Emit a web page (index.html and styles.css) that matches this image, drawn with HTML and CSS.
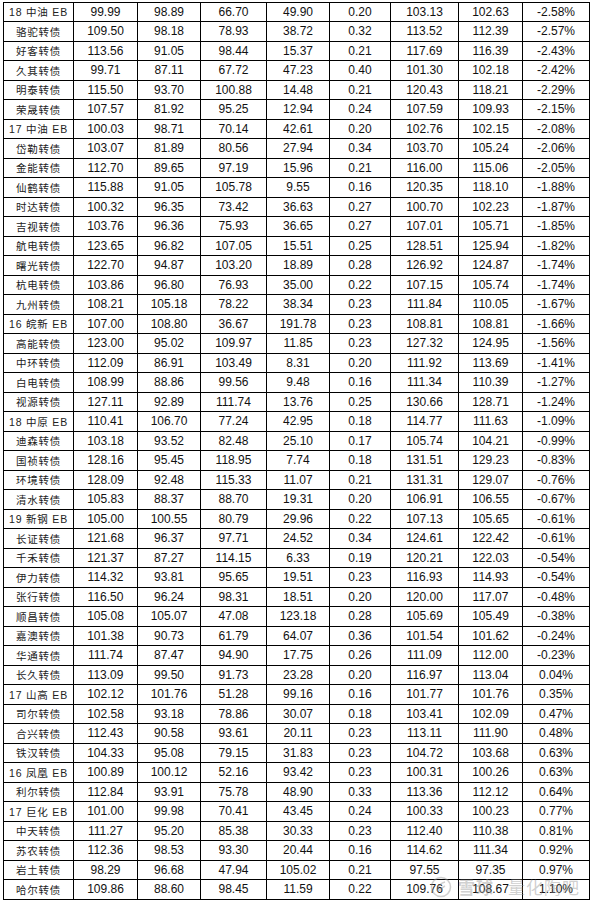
FILE: index.html
```html
<!DOCTYPE html>
<html lang="zh-CN">
<head>
<meta charset="utf-8">
<title>转债表</title>
<link rel="stylesheet" href="styles.css">
</head>
<body>
<div class="page">
  <div class="sheet" id="sheet"></div>
  <div class="watermark">
    <svg class="wm-logo" viewBox="0 0 22 22" width="22" height="22"><circle cx="11" cy="11" r="9.5" fill="none" stroke="currentColor" stroke-width="1.6"/><path d="M7 15 C8 10 11 7 15 6 M9 15 C11 12 13 11 15 10" fill="none" stroke="currentColor" stroke-width="1.6"/></svg>
    <span class="wm-text">雪球</span>
    <span class="wm-text wm-sub">量化陶吧</span>
  </div>
</div>
<script>
var rows = [
["18 中油 EB","99.99","98.89","66.70","49.90","0.20","103.13","102.63","-2.58%"],
["骆驼转债","109.50","98.18","78.93","38.72","0.32","113.52","112.39","-2.57%"],
["好客转债","113.56","91.05","98.44","15.37","0.21","117.69","116.39","-2.43%"],
["久其转债","99.71","87.11","67.72","47.23","0.40","101.30","102.18","-2.42%"],
["明泰转债","115.50","93.70","100.88","14.48","0.21","120.43","118.21","-2.29%"],
["荣晟转债","107.57","81.92","95.25","12.94","0.24","107.59","109.93","-2.15%"],
["17 中油 EB","100.03","98.71","70.14","42.61","0.20","102.76","102.15","-2.08%"],
["岱勒转债","103.07","81.89","80.56","27.94","0.34","103.70","105.24","-2.06%"],
["金能转债","112.70","89.65","97.19","15.96","0.21","116.00","115.06","-2.05%"],
["仙鹤转债","115.88","91.05","105.78","9.55","0.16","120.35","118.10","-1.88%"],
["时达转债","100.32","96.35","73.42","36.63","0.27","100.70","102.23","-1.87%"],
["吉视转债","103.76","96.36","75.93","36.65","0.27","107.01","105.71","-1.85%"],
["航电转债","123.65","96.82","107.05","15.51","0.25","128.51","125.94","-1.82%"],
["曙光转债","122.70","94.87","103.20","18.89","0.28","126.92","124.87","-1.74%"],
["杭电转债","103.86","96.80","76.93","35.00","0.22","107.15","105.74","-1.74%"],
["九州转债","108.21","105.18","78.22","38.34","0.23","111.84","110.05","-1.67%"],
["16 皖新 EB","107.00","108.80","36.67","191.78","0.23","108.81","108.81","-1.66%"],
["高能转债","123.00","95.02","109.97","11.85","0.23","127.32","124.95","-1.56%"],
["中环转债","112.09","86.91","103.49","8.31","0.20","111.92","113.69","-1.41%"],
["白电转债","108.99","88.86","99.56","9.48","0.16","111.34","110.39","-1.27%"],
["视源转债","127.11","92.89","111.74","13.76","0.25","130.66","128.71","-1.24%"],
["18 中原 EB","110.41","106.70","77.24","42.95","0.18","114.77","111.63","-1.09%"],
["迪森转债","103.18","93.52","82.48","25.10","0.17","105.74","104.21","-0.99%"],
["国祯转债","128.16","95.45","118.95","7.74","0.18","131.51","129.23","-0.83%"],
["环境转债","128.09","92.48","115.33","11.07","0.21","131.31","129.07","-0.76%"],
["清水转债","105.83","88.37","88.70","19.31","0.20","106.91","106.55","-0.67%"],
["19 新钢 EB","105.00","100.55","80.79","29.96","0.22","107.13","105.65","-0.61%"],
["长证转债","121.68","96.37","97.71","24.52","0.34","124.61","122.42","-0.61%"],
["千禾转债","121.37","87.27","114.15","6.33","0.19","120.21","122.03","-0.54%"],
["伊力转债","114.32","93.81","95.65","19.51","0.23","116.93","114.93","-0.54%"],
["张行转债","116.50","96.24","98.31","18.51","0.20","120.00","117.07","-0.48%"],
["顺昌转债","105.08","105.07","47.08","123.18","0.28","105.69","105.49","-0.38%"],
["嘉澳转债","101.38","90.73","61.79","64.07","0.36","101.54","101.62","-0.24%"],
["华通转债","111.74","87.47","94.90","17.75","0.26","111.09","112.00","-0.23%"],
["长久转债","113.09","99.50","91.73","23.28","0.20","116.97","113.04","0.04%"],
["17 山高 EB","102.12","101.76","51.28","99.16","0.16","101.77","101.76","0.35%"],
["司尔转债","102.58","93.18","78.86","30.07","0.18","103.41","102.09","0.47%"],
["合兴转债","112.43","90.58","93.61","20.11","0.23","113.11","111.90","0.48%"],
["铁汉转债","104.33","95.08","79.15","31.83","0.23","104.72","103.68","0.63%"],
["16 凤凰 EB","100.89","100.12","52.16","93.42","0.23","100.31","100.26","0.63%"],
["利尔转债","112.84","93.91","75.78","48.90","0.33","113.36","112.12","0.64%"],
["17 巨化 EB","101.00","99.98","70.41","43.45","0.24","100.33","100.23","0.77%"],
["中天转债","111.27","95.20","85.38","30.33","0.23","112.40","110.38","0.81%"],
["苏农转债","112.36","98.53","93.30","20.44","0.16","114.62","111.34","0.92%"],
["岩土转债","98.29","96.68","47.94","105.02","0.21","97.55","97.35","0.97%"],
["哈尔转债","109.86","88.60","98.45","11.59","0.22","109.76","108.67","1.10%"]
];
var sheet = document.getElementById('sheet');
rows.forEach(function (r) {
  r.forEach(function (v, i) {
    var d = document.createElement('div');
    d.className = i === 0 ? 'cell name' : 'cell num';
    d.textContent = v;
    sheet.appendChild(d);
  });
});
</script>
</body>
</html>
```
FILE: styles.css
```css
html, body {
  margin: 0;
  padding: 0;
  background: #fff;
}
.page {
  position: relative;
  width: 592px;
  height: 905px;
  padding: 1.5px 0 0 3px;
  box-sizing: border-box;
}
.sheet {
  display: grid;
  grid-template-columns: 70px 64px 63px 66px 63px 61px 68px 64px 67px;
  grid-auto-rows: 19.5px;
  width: max-content;
  border-left: 1px solid #000;
  border-top: 1px solid #000;
}
.cell {
  border-right: 1px solid #000;
  border-bottom: 1px solid #000;
  display: flex;
  align-items: center;
  justify-content: center;
  color: #111;
  white-space: nowrap;
  overflow: hidden;
}
.num {
  font-family: "Liberation Sans", Arial, sans-serif;
  font-size: 12px;
}
.name {
  font-family: "Liberation Sans", "Noto Sans CJK SC", sans-serif;
  font-size: 10.5px;
  letter-spacing: 0.8px;
  color: #222;
}
.watermark {
  position: absolute;
  left: 430px;
  top: 876px;
  display: flex;
  align-items: center;
  gap: 6px;
  color: rgba(150, 150, 150, 0.45);
  pointer-events: none;
}
.wm-logo {
  display: block;
}
.wm-text {
  font-family: "Noto Sans CJK SC", sans-serif;
  font-size: 17px;
  font-weight: 700;
  line-height: 20px;
  letter-spacing: 1px;
}
.wm-sub {
  margin-left: 8px;
  font-weight: 400;
}
```
